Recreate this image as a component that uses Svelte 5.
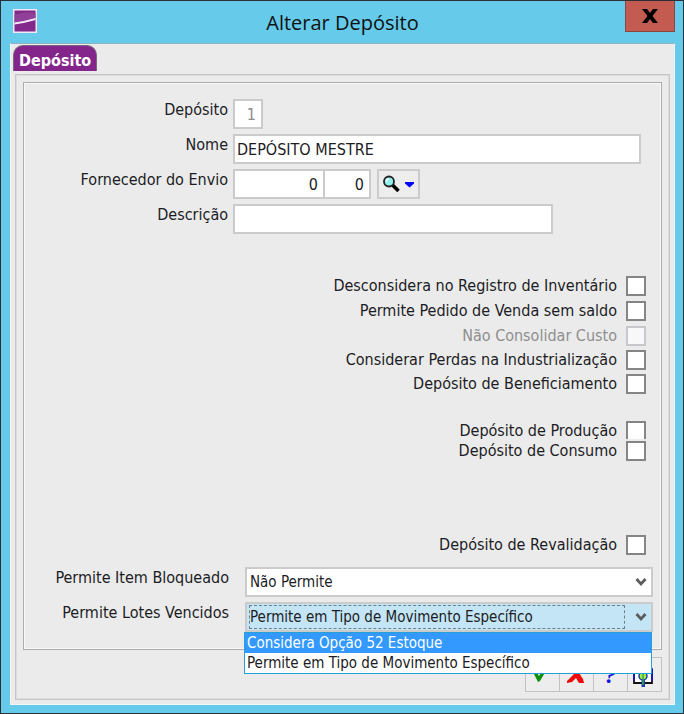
<script lang="ts">
  type Check = { id: string; label: string; disabled?: boolean; clipped?: boolean };

  const checkGroups: { name: string; items: Check[] }[] = [
    {
      name: "saldo",
      items: [
        { id: "inventario", label: "Desconsidera no Registro de Inventário" },
        { id: "pedido", label: "Permite Pedido de Venda sem saldo" },
        { id: "custo", label: "Não Consolidar Custo", disabled: true },
      ],
    },
    {
      name: "industria",
      items: [
        { id: "perdas", label: "Considerar Perdas na Industrialização" },
        { id: "beneficiamento", label: "Depósito de Beneficiamento" },
      ],
    },
    {
      name: "producao",
      items: [
        { id: "producao", label: "Depósito de Produção", clipped: true },
        { id: "consumo", label: "Depósito de Consumo" },
      ],
    },
    {
      name: "revalidacao",
      items: [{ id: "revalidacao", label: "Depósito de Revalidação" }],
    },
  ];

  const loteOptions = [
    "Considera Opção 52 Estoque",
    "Permite em Tipo de Movimento Específico",
  ];

  let nome = $state("DEPÓSITO MESTRE");
  let descricao = $state("");
  let lote = $state(loteOptions[1]);
  let open = $state(true);
  let highlighted = $state(0);

  function choose(option: string) {
    lote = option;
    open = false;
  }

  function toggleList(event: MouseEvent) {
    event.preventDefault();
    open = !open;
  }
</script>

{#snippet chevron()}
  <svg class="chevron" viewBox="0 0 12 10" aria-hidden="true">
    <path d="M1.500 2 6 7 10.500 2" fill="none" stroke="#5c5c5c" stroke-width="2.800" />
  </svg>
{/snippet}

<div class="window">
  <header class="titlebar">
    <svg class="logo" viewBox="0 0 24 24" aria-hidden="true">
      <rect width="24" height="24" fill="#f4e8f6" />
      <rect x="1.500" y="1.500" width="21" height="21" fill="#84298c" />
      <path d="M1.500 6Q12 2 22.500 4V9Q12 11 1.500 13.500Z" fill="#914099" />
      <path d="M1.500 13.500Q12 12 22.500 9V11Q12 14 1.500 15.500Z" fill="#f6eaf8" />
    </svg>
    <h1>Alterar Depósito</h1>
    <button class="close" aria-label="Fechar">
      <svg viewBox="0 0 16 14" aria-hidden="true">
        <path d="M0 0H5L8 4 11 0H16L10.500 7 16 14H11L8 10 5 14H0L5.500 7Z" fill="#000" />
      </svg>
    </button>
  </header>

  <main class="client">
    <button class="tab">Depósito</button>

    <div class="page">
      <section class="panel">
        <div class="fields">
          <label for="codigo">Depósito</label>
          <div class="line">
            <input id="codigo" class="num code" value="1" disabled />
          </div>

          <label for="nome">Nome</label>
          <div class="line">
            <input id="nome" class="name" bind:value={nome} />
          </div>

          <label for="fornecedor">Fornecedor do Envio</label>
          <div class="line">
            <input id="fornecedor" class="num supplier" value="0" />
            <input class="num branch" value="0" aria-label="Filial do fornecedor" />
            <button class="lookup" aria-label="Pesquisar fornecedor">
              <svg viewBox="0 0 32 18" aria-hidden="true">
                <path d="M9.500 10 15.500 16" stroke="#000" stroke-width="3.500" />
                <circle cx="6" cy="6.500" r="5" fill="#8ff0ee" stroke="#222" stroke-width="1.800" />
                <path d="M3.500 6.500Q3.500 4 6 4" stroke="#fff" stroke-width="1.500" fill="none" />
                <path d="M22 7H31V8.500L26.500 12.500 22 8.500Z" fill="#00f" />
              </svg>
            </button>
          </div>

          <label for="descricao">Descrição</label>
          <div class="line">
            <input id="descricao" class="description" bind:value={descricao} />
          </div>
        </div>

        {#each checkGroups as group (group.name)}
          <div class="checks {group.name}">
            {#each group.items as item (item.id)}
              <label class="check" class:disabled={item.disabled} class:clipped={item.clipped}>
                <span>{item.label}</span>
                <input type="checkbox" disabled={item.disabled} />
              </label>
            {/each}
          </div>
        {/each}

        <div class="combos">
          <label for="bloqueado">Permite Item Bloqueado</label>
          <div class="combo">
            <select id="bloqueado">
              <option>Não Permite</option>
              <option>Permite</option>
            </select>
            {@render chevron()}
          </div>

          <label for="vencidos">Permite Lotes Vencidos</label>
          <div class="combo" class:open>
            <select id="vencidos" bind:value={lote} onmousedown={toggleList}>
              {#each loteOptions as option (option)}
                <option value={option}>{option}</option>
              {/each}
            </select>
            {@render chevron()}
            {#if open}
              <div class="list" role="listbox" aria-label="Permite Lotes Vencidos">
                {#each loteOptions as option, i (option)}
                  <button
                    role="option"
                    aria-selected={i === highlighted}
                    class:highlighted={i === highlighted}
                    onmouseenter={() => (highlighted = i)}
                    onclick={() => choose(option)}
                  >
                    {option}
                  </button>
                {/each}
              </div>
            {/if}
          </div>
        </div>
      </section>

      <footer class="actions">
        <button aria-label="Confirmar">
          <svg viewBox="0 0 24 24" aria-hidden="true">
            <path d="M3 11 6 10 8 13Q12 7 19 3 13 10 9 18L7 19Z" fill="#0a8f0a" />
          </svg>
        </button>
        <button aria-label="Cancelar">
          <svg viewBox="0 0 24 24" aria-hidden="true">
            <path d="M4 5 8 4 12 9 16 3 18 5 14 10 18 16 19 20H14L11 15 7 19 2 20V18L9 11Z" fill="#f00808" />
          </svg>
        </button>
        <button aria-label="Ajuda">
          <span class="help">?</span>
        </button>
        <button aria-label="Sair">
          <svg viewBox="0 0 24 24" aria-hidden="true">
            <path d="M1 7H19V20H1Z" fill="#fff" stroke="#111" stroke-width="1.800" />
            <path d="M1 5V18M19 5V18" stroke="#1a1acb" stroke-width="1.500" />
            <path d="M8.500 14H12V24H8.500Z" fill="#1c3aa8" />
            <circle cx="10" cy="13" r="4" fill="#a8ee3c" stroke="#1c3aa8" stroke-width="1.500" />
            <path d="M10 11V22" stroke="#2fa36a" stroke-width="1.500" />
          </svg>
        </button>
      </footer>
    </div>
  </main>
</div>

<style>
  :global(body) {
    margin: 0;
  }

  .window {
    display: flex;
    flex-direction: column;
    box-sizing: border-box;
    min-height: 100vh;
    padding: 0 8px 8px 9px;
    border: 1px solid #2b3036;
    background: #66caea;
    font-family: "DejaVu Sans Condensed", "Noto Sans", sans-serif;
    font-size: 16px;
    line-height: 20px;
    color: #1c1c24;
  }

  button,
  input,
  select {
    box-sizing: border-box;
    margin: 0;
    padding: 0;
    border: 0;
    border-radius: 0;
    font: inherit;
    color: inherit;
  }

  .titlebar {
    display: grid;
    grid-template-columns: 54px 1fr 54px;
    height: 42px;
  }

  .logo {
    width: 24px;
    height: 24px;
    margin: 8px 0 0 3px;
  }

  h1 {
    margin: 0;
    font: 20px/44px "Open Sans", sans-serif;
    text-align: center;
    color: #111;
  }

  .close {
    display: flex;
    align-items: center;
    justify-content: center;
    justify-self: end;
    width: 50px;
    height: 31px;
    border: 1px solid #8b463f;
    border-top: 0;
    background: #c45b50;
  }

  .close svg {
    width: 16px;
    height: 14px;
  }

  .client {
    display: flex;
    flex: 1;
    flex-direction: column;
    padding: 1px 4px 4px;
    border: 1px solid #f4f4f4;
    border-top-color: #8fb3c4;
    background: #ebebeb;
  }

  .tab {
    align-self: flex-start;
    height: 26px;
    margin: 0 0 3px -2px;
    padding: 4px 5px 0;
    border: 1px solid #7a6a7e;
    border-bottom: 0;
    border-radius: 10px 10px 0 0;
    background: #84258c;
    color: #fff;
    font-weight: bold;
  }

  .page {
    display: flex;
    flex: 1;
    flex-direction: column;
    padding: 7px;
    border: 1px solid #c6c6c6;
    box-shadow: inset 0 0 0 1px #dcdcdc;
  }

  .panel {
    flex: 1;
    padding: 16px 8px 14px 16px;
    border: 1px solid #acacac;
    box-shadow: inset 0 0 0 1px #f8f8f8;
  }

  .fields {
    display: grid;
    grid-template-columns: 188px 1fr;
    gap: 5px;
    padding-right: 12px;
  }

  .fields label,
  .combos label {
    line-height: 22px;
    text-align: right;
  }

  .line {
    display: flex;
  }

  .line input {
    min-width: 0;
    height: 30px;
    padding: 0 2px;
    border: 2px solid #cbcbcb;
    background: #fff;
  }

  .line .num {
    padding-right: 5px;
    text-align: right;
  }

  .line .code {
    width: 30px;
    color: #8c8c8c;
  }

  .line .name {
    flex: 1;
  }

  .line .supplier {
    width: 92px;
  }

  .line .branch {
    width: 48px;
    margin-left: -2px;
  }

  .line .description {
    width: 320px;
  }

  .lookup {
    display: flex;
    align-items: center;
    justify-content: center;
    width: 43px;
    height: 30px;
    margin-left: 6px;
    border: 2px solid #cbcbcb;
    background: #ededed;
  }

  .lookup svg {
    width: 32px;
    height: 18px;
  }

  .checks {
    display: flex;
    flex-direction: column;
    align-items: flex-end;
    gap: 5px;
    padding-right: 7px;
  }

  .saldo {
    margin-top: 42px;
  }

  .industria {
    gap: 4px;
    margin-top: 4px;
  }

  .producao {
    gap: 2px;
    margin-top: 27px;
  }

  .revalidacao {
    margin-top: 74px;
  }

  .check {
    display: flex;
    align-items: flex-start;
    gap: 9px;
    height: 20px;
  }

  .check.clipped {
    height: 18px;
    overflow: hidden;
  }

  .check.disabled {
    color: #8e8e8e;
  }

  .check input {
    appearance: none;
    width: 20px;
    height: 20px;
    border: 2px solid #858585;
    background: #fff;
  }

  .check input:checked {
    background: #555;
    box-shadow: inset 0 0 0 3px #fff;
  }

  .check.disabled input {
    border-color: #c8c8cc;
    background: #f8f8f8;
  }

  .combos {
    display: grid;
    grid-template-columns: 189px 1fr;
    gap: 5px 16px;
    margin-top: 12px;
  }

  .combo {
    position: relative;
    display: flex;
    align-items: center;
    box-sizing: border-box;
    height: 30px;
    border: 2px solid #cbcbcb;
    background: #fff;
    font-size: 15px;
  }

  .combo select {
    appearance: none;
    flex: 1;
    min-width: 0;
    height: 24px;
    margin-left: 2px;
    border: 1px solid transparent;
    background: transparent;
    outline: 0;
  }

  .combo.open {
    background: #c4e5f6;
  }

  .combo.open select {
    border: 1px dashed #6f7f88;
  }

  .chevron {
    width: 12px;
    height: 10px;
    margin: 0 4px 0 10px;
    pointer-events: none;
  }

  .list {
    position: absolute;
    z-index: 1;
    top: 28px;
    right: -1px;
    left: -3px;
    border: 1px solid #26a0da;
    background: #fff;
  }

  .list button {
    display: block;
    width: 100%;
    height: 20px;
    padding: 0 2px;
    background: #fff;
    text-align: left;
    white-space: nowrap;
  }

  .list button.highlighted {
    background: #3399ff;
    color: #fff;
  }

  .actions {
    display: flex;
    justify-content: flex-end;
    margin-top: 7px;
  }

  .actions button {
    display: flex;
    align-items: center;
    justify-content: center;
    width: 35px;
    height: 35px;
    margin-left: -1px;
    border: 1px solid #c2c2c2;
    background: #ededed;
  }

  .actions svg {
    width: 24px;
    height: 24px;
  }

  .help {
    font: italic bold 24px/24px "Liberation Serif", serif;
    color: #1616e0;
  }
</style>
